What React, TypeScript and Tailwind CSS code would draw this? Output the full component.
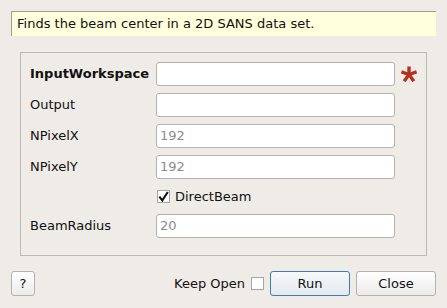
const font = "font-['DejaVu_Sans',sans-serif]";

/* ── Text field ── */
function Field({ value = "" }: { value?: string }) {
  return (
    <div className="flex h-[24px] w-[239px] items-center rounded-[3px] border border-[#b5b1ad] bg-white px-[3px] text-[13px] text-[#8c8c8c]">
      {value}
    </div>
  );
}

function Row({ label, bold, children }: { label: string; bold?: boolean; children: React.ReactNode }) {
  return (
    <div className="flex h-[24px] items-center">
      <div className={`w-[126px] text-[13px] text-[#111] ${bold ? "font-bold" : ""}`}>{label}</div>
      {children}
    </div>
  );
}

function Check({ checked }: { checked?: boolean }) {
  return (
    <div className="flex h-[13px] w-[13px] items-center justify-center border border-[#a8a4a0] bg-white">
      {checked && (
        <svg width="11" height="11" viewBox="0 0 11 11">
          <path d="M1.3 5.6 L4.3 9.4 L9.8 1" fill="none" stroke="#111" strokeWidth="2.1" />
        </svg>
      )}
    </div>
  );
}

/* required-field marker */
function Star() {
  return (
    <svg width="16" height="16" viewBox="0 0 16 16" className="absolute left-[371px] top-[4px]">
      <g stroke="#b3321f" strokeWidth="3.4" strokeLinecap="butt">
        <line x1="8" y1="8.5" x2="8" y2="0.5" />
        <line x1="8" y1="8.5" x2="15.6" y2="5.8" />
        <line x1="8" y1="8.5" x2="0.4" y2="5.8" />
        <line x1="8" y1="8.5" x2="12.8" y2="15.2" />
        <line x1="8" y1="8.5" x2="3.2" y2="15.2" />
      </g>
    </svg>
  );
}

export default function App() {
  return (
    <div className={`${font} h-[308px] w-[447px] overflow-hidden bg-[#efebe7] pt-[11px]`}>
      {/* Description tip */}
      <div className="ml-[11px] flex h-[25px] w-[425px] items-center border-l border-t border-[#a09c98] bg-[#ffffdc] pl-[5px] text-[13px] text-[#111]">
        Finds the beam center in a 2D SANS data set.
      </div>

      {/* Properties group */}
      <div className="ml-[20px] mt-[16px] w-[407px] border border-[#bcb8b4] pb-[17px] pl-[9px] pt-[9px]">
        <div className="flex flex-col gap-[7px]">
          <div className="relative">
            <Row label="InputWorkspace" bold>
              <Field />
            </Row>
            <Star />
          </div>
          <Row label="Output">
            <Field />
          </Row>
          <Row label="NPixelX">
            <Field value="192" />
          </Row>
          <Row label="NPixelY">
            <Field value="192" />
          </Row>
          <div className="flex h-[21px] items-center gap-[5px] pl-[127px]">
            <Check checked />
            <span className="text-[13px] text-[#111]">DirectBeam</span>
          </div>
          <Row label="BeamRadius">
            <Field value="20" />
          </Row>
        </div>
      </div>

      {/* Buttons */}
      <div className="mt-[15px] flex items-center pl-[11px] pr-[11px]">
        <button className="flex h-[25px] w-[24px] items-center justify-center rounded-[3px] border border-[#b5b1ad] bg-gradient-to-b from-white to-[#ecebea] text-[13px] text-[#111]">
          ?
        </button>
        <div className="flex-1" />
        <span className="text-[13px] text-[#111]">Keep Open</span>
        <div className="ml-[6px]">
          <Check />
        </div>
        <button className="ml-[6px] flex h-[25px] w-[80px] items-center justify-center rounded-[3px] border border-[#3d7cb4] bg-gradient-to-b from-[#f7f9fb] to-[#e4e8ec] text-[13px] text-[#111]">
          Run
        </button>
        <button className="ml-[6px] flex h-[25px] w-[80px] items-center justify-center rounded-[3px] border border-[#b5b1ad] bg-gradient-to-b from-white to-[#ecebea] text-[13px] text-[#111]">
          Close
        </button>
      </div>
    </div>
  );
}
